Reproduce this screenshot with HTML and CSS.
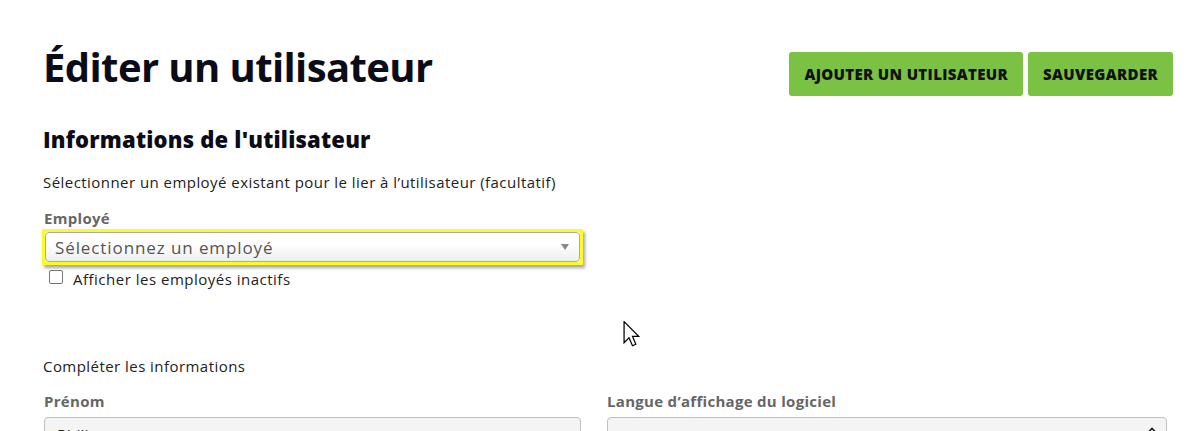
FILE: index.html
```html
<!DOCTYPE html>
<html lang="fr">
<head>
<meta charset="utf-8">
<title>Éditer un utilisateur</title>
<link rel="stylesheet" href="styles.css">
</head>
<body>
<div class="page">
  <header class="page-header">
    <h1 class="title">Éditer un utilisateur</h1>
    <div class="actions">
      <button class="btn">AJOUTER UN UTILISATEUR</button>
      <button class="btn">SAUVEGARDER</button>
    </div>
  </header>

  <section class="section">
    <h2 class="subtitle">Informations de l'utilisateur</h2>
    <p class="text">Sélectionner un employé existant pour le lier à l’utilisateur (facultatif)</p>
    <div class="field field-employe">
      <label class="label">Employé</label>
      <div class="select-focus">
        <div class="select2">
          <span class="select2-text">Sélectionnez un employé</span>
          <span class="select2-arrow"></span>
        </div>
      </div>
      <label class="check">
        <span class="checkbox"></span>
        <span>Afficher les employés inactifs</span>
      </label>
    </div>

    <p class="text text-complete">Compléter les informations</p>
    <div class="grid">
      <div class="field">
        <label class="label">Prénom</label>
        <div class="input">Philippe</div>
      </div>
      <div class="field">
        <label class="label">Langue d’affichage du logiciel</label>
        <div class="input input-select">
          <span></span>
          <svg class="updown" viewBox="0 0 8 12" width="8" height="12"><path d="M1 4.5 L4 1.5 L7 4.5" fill="none" stroke="#222" stroke-width="1.6"/><path d="M1 7.5 L4 10.5 L7 7.5" fill="none" stroke="#222" stroke-width="1.6"/></svg>
        </div>
      </div>
    </div>
  </section>
</div>

<svg class="cursor" viewBox="0 0 13 21" width="17" height="26">
  <path d="M0.5 0.5 L0.5 17.5 L4.5 13.5 L7.3 20 L10 18.8 L7.3 12.5 L12.5 12.5 Z" fill="#fff" stroke="#000" stroke-width="1" stroke-linejoin="miter"/>
</svg>
</body>
</html>
```

FILE: styles.css
```css
* { box-sizing: border-box; }

html, body {
  margin: 0;
  padding: 0;
  background: #ffffff;
}

body {
  font-family: "Open Sans", "Noto Sans", "Liberation Sans", sans-serif;
  color: #1f1f1f;
  overflow: hidden;
  height: 431px;
  position: relative;
}

.page {
  padding: 52px 15px 0 43px;
}

.page-header {
  display: flex;
  justify-content: space-between;
  align-items: flex-start;
}

.title {
  margin: 0;
  font-size: 40px;
  line-height: 30px;
  font-weight: 700;
  color: #0c0c18;
  letter-spacing: -0.6px;
}

.actions {
  display: flex;
  gap: 5px;
}

.btn {
  height: 44px;
  padding: 0 15px;
  border: none;
  border-radius: 3px;
  background: #7bc144;
  color: #111111;
  font-family: inherit;
  font-size: 15px;
  font-weight: 800;
  letter-spacing: 0.35px;
}

.section {
  margin-top: 28px;
}

.subtitle {
  margin: 0;
  font-size: 22px;
  line-height: 30px;
  font-weight: 800;
  letter-spacing: 0.2px;
  color: #0c0c18;
}

.text {
  margin: 18px 0 0;
  font-size: 15px;
  line-height: 20px;
  letter-spacing: 0.45px;
  color: #222222;
}

.field-employe {
  margin-top: 16px;
  width: 540px;
}

.label {
  display: block;
  font-size: 15px;
  line-height: 20px;
  font-weight: 700;
  letter-spacing: 0.3px;
  color: #666666;
  padding-left: 1px;
}

.select-focus {
  margin-top: 1px;
  border: 3px solid #fbfb2c;
  box-shadow: 2px 3px 3px rgba(0, 0, 0, 0.35);
  height: 36px;
  margin-left: -1px;
}

.select2 {
  height: 30px;
  border: 1px solid #aaaaaa;
  border-radius: 4px;
  background: linear-gradient(to bottom, #ffffff 40%, #eeeeee 100%);
  display: flex;
  align-items: center;
  justify-content: space-between;
  padding: 0 10px 0 9px;
}

.select2-text {
  font-size: 17px;
  letter-spacing: 0.9px;
  color: #555555;
}

.select2-arrow {
  width: 0;
  height: 0;
  border-left: 4px solid transparent;
  border-right: 4px solid transparent;
  border-top: 6px solid #888888;
}

.check {
  display: flex;
  align-items: center;
  gap: 10px;
  margin-top: 4px;
  padding-left: 6px;
  font-size: 15px;
  line-height: 20px;
  letter-spacing: 0.5px;
  color: #222222;
}

.checkbox {
  width: 14px;
  height: 14px;
  border: 1px solid #767676;
  border-radius: 2px;
  background: #ffffff;
  margin-top: -4px;
}

.text-complete {
  margin-top: 67px;
}

.grid {
  margin-top: 15px;
  display: grid;
  grid-template-columns: 537px 560px;
  column-gap: 26px;
  padding-left: 1px;
}

.grid .label {
  padding-left: 0;
}

.input {
  margin-top: 6px;
  height: 38px;
  border: 1px solid #c0c0c0;
  border-radius: 4px;
  background: #f4f4f4;
  padding: 6px 12px;
  font-size: 16px;
  line-height: 24px;
  color: #222222;
}

.input-select {
  display: flex;
  justify-content: space-between;
  align-items: flex-start;
  padding-top: 9px;
  padding-right: 10px;
}

.updown {
  display: block;
}

.cursor {
  position: absolute;
  left: 623px;
  top: 321px;
}
```
